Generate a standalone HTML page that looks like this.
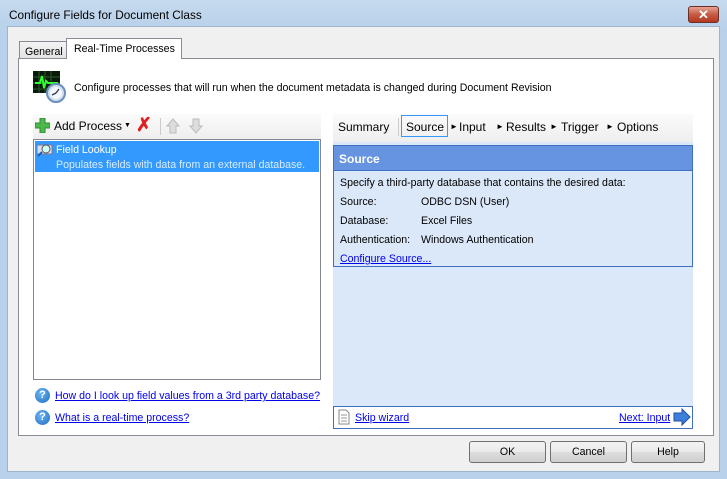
<!DOCTYPE html><html><head><style>
*{margin:0;padding:0;box-sizing:border-box}
body{width:727px;height:479px;background:#b9d1ea;font-family:"Liberation Sans",sans-serif;font-size:10.6px;color:#000;position:relative;overflow:hidden}
.a{position:absolute;white-space:nowrap}
a,.lk{color:#0000ee;text-decoration:underline}
.btn{position:absolute;top:441px;height:22px;border:1px solid #707070;border-radius:3px;background:linear-gradient(#f2f2f2,#ebebeb 50%,#dddddd 51%,#cfcfcf);text-align:center;line-height:20px}
.q{position:absolute;width:15px;height:15px;border-radius:50%;background:radial-gradient(circle at 40% 35%,#6fb6f0,#1a6cc4);color:#fff;font-weight:bold;font-size:11px;text-align:center;line-height:15px}
.t{position:absolute;top:120px;font-size:12px;white-space:nowrap}
.ar{position:absolute;top:122px;font-size:8px}
</style></head><body>
<div class="a" style="left:0;top:0;width:727px;height:28px;background:linear-gradient(#c6daee,#b9d1ea)"></div>
<div class="a" style="left:9px;top:8px;font-size:11.8px">Configure Fields for Document Class</div>
<div class="a" style="left:688px;top:6px;width:31px;height:17px;border:1px solid #6b3026;border-radius:3px;background:linear-gradient(#e8a493,#c75a43 50%,#b3391f);color:#fff;font-weight:bold;text-align:center;line-height:15px;font-size:13px">✕</div>
<div class="a" style="left:7px;top:26px;width:713px;height:446px;background:#f0f0f0;border:1px solid #9fb4cc"></div>
<div class="a" style="left:19px;top:41px;width:48px;height:18px;border:1px solid #898c95;border-bottom:none;background:linear-gradient(#f3f3f3,#e3e3e3);padding:4px 0 0 5px">General</div>
<div class="a" style="left:66px;top:38px;width:116px;height:21px;border:1px solid #898c95;border-bottom:none;background:#fff;padding:4px 0 0 7px;z-index:2">Real-Time Processes</div>
<div class="a" style="left:18px;top:58px;width:696px;height:378px;border:1px solid #898c95;background:#fff"></div>
<svg class="a" style="left:33px;top:71px" width="34" height="32"><rect x="0" y="0" width="27" height="22" fill="#0a1a0a"/><g stroke="#2a5a2a" stroke-width="1"><path d="M0 6H27M0 12H27M0 18H27M6 0V22M12 0V22M18 0V22"/></g><path d="M2 12 L7 12 L9 5 L11 17 L13 10 L15 12 L25 12" stroke="#30ff30" stroke-width="2" fill="none"/><circle cx="23" cy="22" r="9" fill="#cfe0f4" stroke="#6b8fb8" stroke-width="2"/><circle cx="23" cy="22" r="6" fill="#f4f8fc"/><path d="M23 22 L26 18 M23 22 L19 24" stroke="#335" stroke-width="1.3"/></svg>
<div class="a" style="left:74px;top:82px">Configure processes that will run when the document metadata is changed during Document Revision</div>
<div class="a" style="left:33px;top:114px;width:288px;height:25px;background:linear-gradient(#fbfbfb,#eeeeee)"></div>
<svg class="a" style="left:35px;top:118px" width="15" height="15"><path d="M5 0H10V5H15V10H10V15H5V10H0V5H5Z" fill="#4cb84c" stroke="#2e8a2e"/></svg>
<div class="a" style="left:54px;top:119px;font-size:12px">Add Process</div>
<div class="a" style="left:124px;top:122px;font-size:7px">▼</div>
<div class="a" style="left:136px;top:114px;color:#e02020;font-size:19px;font-weight:bold">✗</div>
<div class="a" style="left:160px;top:118px;width:1px;height:17px;background:#ccc"></div>
<svg class="a" style="left:166px;top:118px" width="44" height="16"><path d="M7 1L13 8H10V15H4V8H1Z" fill="#ddd" stroke="#bbb"/><path d="M30 15L36 8H33V1H27V8H24Z" fill="#ddd" stroke="#bbb"/></svg>
<div class="a" style="left:33px;top:139px;width:288px;height:241px;border:1px solid #828790;background:#fff"></div>
<div class="a" style="left:35px;top:141px;width:284px;height:31px;background:#3399ff"></div>
<svg class="a" style="left:37px;top:143px" width="16" height="14"><rect x="0" y="2" width="15" height="9" fill="#dde" stroke="#778"/><circle cx="9" cy="6" r="4" fill="#cfe" stroke="#556"/><path d="M5 9L1 13" stroke="#1a5ec0" stroke-width="2"/></svg>
<div class="a" style="left:56px;top:144px;color:#fff">Field Lookup</div>
<div class="a" style="left:56px;top:159px;color:#d8ecff">Populates fields with data from an external database.</div>
<div class="q" style="left:35px;top:388px">?</div>
<div class="a lk" style="left:55px;top:390px">How do I look up field values from a 3rd party database?</div>
<div class="q" style="left:35px;top:410px">?</div>
<div class="a lk" style="left:55px;top:412px">What is a real-time process?</div>
<div class="a" style="left:333px;top:114px;width:360px;height:28px;background:linear-gradient(#fbfbfb,#eeeeee)"></div>
<div class="t" style="left:338px">Summary</div>
<div class="a" style="left:398px;top:118px;width:1px;height:18px;background:#ccc"></div>
<div class="a" style="left:401px;top:115px;width:47px;height:22px;border:1px solid #3399ff"></div>
<div class="t" style="left:406px">Source</div><div class="ar" style="left:450px">►</div>
<div class="t" style="left:459px">Input</div><div class="ar" style="left:496px">►</div>
<div class="t" style="left:506px">Results</div><div class="ar" style="left:550px">►</div>
<div class="t" style="left:561px">Trigger</div><div class="ar" style="left:606px">►</div>
<div class="t" style="left:617px">Options</div>
<div class="a" style="left:333px;top:142px;width:360px;height:286px;background:#dbe8f9"></div>
<div class="a" style="left:333px;top:145px;width:360px;height:122px;border:1px solid #3f6fc0;background:#dbe8f9"></div>
<div class="a" style="left:333px;top:145px;width:360px;height:26px;background:#6694e0;border:1px solid #3f6fc0;color:#fff;font-weight:bold;font-size:12px;padding:6px 0 0 5px">Source</div>
<div class="a" style="left:340px;top:177px">Specify a third-party database that contains the desired data:</div>
<div class="a" style="left:340px;top:196px">Source:</div><div class="a" style="left:421px;top:196px">ODBC DSN (User)</div>
<div class="a" style="left:340px;top:215px">Database:</div><div class="a" style="left:421px;top:215px">Excel Files</div>
<div class="a" style="left:340px;top:234px">Authentication:</div><div class="a" style="left:421px;top:234px">Windows Authentication</div>
<div class="a lk" style="left:340px;top:253px">Configure Source...</div>
<div class="a" style="left:333px;top:406px;width:360px;height:23px;border:1px solid #3f6fc0;background:#fff"></div>
<svg class="a" style="left:338px;top:409px" width="12" height="16"><path d="M1 1H8L11 4V15H1Z" fill="#fff" stroke="#888"/><path d="M3 6H9M3 9H9M3 12H9" stroke="#999"/></svg>
<div class="a lk" style="left:355px;top:412px">Skip wizard</div>
<div class="a lk" style="left:619px;top:412px">Next: Input</div>
<svg class="a" style="left:673px;top:408px" width="18" height="18"><path d="M1 5H9V1L17 9L9 17V13H1Z" fill="#3d7fdc" stroke="#1d4fa0"/></svg>
<div class="btn" style="left:469px;width:77px">OK</div>
<div class="btn" style="left:550px;width:77px">Cancel</div>
<div class="btn" style="left:631px;width:74px">Help</div>
</body></html>
